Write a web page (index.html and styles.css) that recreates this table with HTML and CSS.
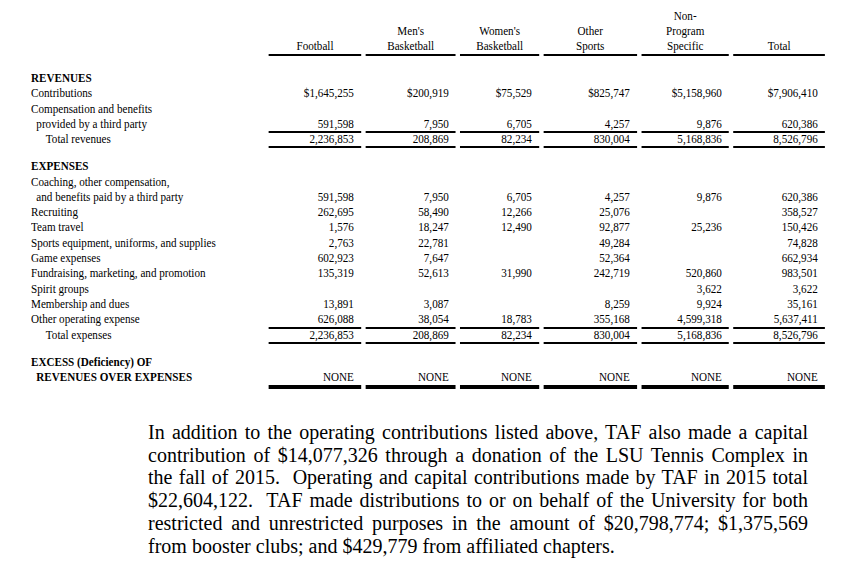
FILE: index.html
```html
<!DOCTYPE html>
<html>
<head>
<meta charset="utf-8">
<link rel="stylesheet" href="styles.css">
</head>
<body>
<div class="page">
  <div class="statement">
    <div class="row head">
      <div></div>
      <div class="colhead">Football</div>
      <div class="colhead">Men's<br>Basketball</div>
      <div class="colhead">Women's<br>Basketball</div>
      <div class="colhead">Other<br>Sports</div>
      <div class="colhead">Non-<br>Program<br>Specific</div>
      <div class="colhead">Total</div>
    </div>

    <div class="section revenues">
      <div class="row"><div class="label bold">REVENUES</div><div></div><div></div><div></div><div></div><div></div><div></div></div>
      <div class="row"><div class="label">Contributions</div><div class="num">$1,645,255</div><div class="num">$200,919</div><div class="num">$75,529</div><div class="num">$825,747</div><div class="num">$5,158,960</div><div class="num">$7,906,410</div></div>
      <div class="row"><div class="label">Compensation and benefits</div><div></div><div></div><div></div><div></div><div></div><div></div></div>
      <div class="row"><div class="label ind1">provided by a third party</div><div class="num ul">591,598</div><div class="num ul">7,950</div><div class="num ul">6,705</div><div class="num ul">4,257</div><div class="num ul">9,876</div><div class="num ul">620,386</div></div>
      <div class="row"><div class="label ind2">Total revenues</div><div class="num dul">2,236,853</div><div class="num dul">208,869</div><div class="num dul">82,234</div><div class="num dul">830,004</div><div class="num dul">5,168,836</div><div class="num dul">8,526,796</div></div>
    </div>

    <div class="section expenses">
      <div class="row"><div class="label bold">EXPENSES</div><div></div><div></div><div></div><div></div><div></div><div></div></div>
      <div class="row"><div class="label">Coaching, other compensation,</div><div></div><div></div><div></div><div></div><div></div><div></div></div>
      <div class="row"><div class="label ind1">and benefits paid by a third party</div><div class="num">591,598</div><div class="num">7,950</div><div class="num">6,705</div><div class="num">4,257</div><div class="num">9,876</div><div class="num">620,386</div></div>
      <div class="row"><div class="label">Recruiting</div><div class="num">262,695</div><div class="num">58,490</div><div class="num">12,266</div><div class="num">25,076</div><div class="num"></div><div class="num">358,527</div></div>
      <div class="row"><div class="label">Team travel</div><div class="num">1,576</div><div class="num">18,247</div><div class="num">12,490</div><div class="num">92,877</div><div class="num">25,236</div><div class="num">150,426</div></div>
      <div class="row"><div class="label">Sports equipment, uniforms, and supplies</div><div class="num">2,763</div><div class="num">22,781</div><div class="num"></div><div class="num">49,284</div><div class="num"></div><div class="num">74,828</div></div>
      <div class="row"><div class="label">Game expenses</div><div class="num">602,923</div><div class="num">7,647</div><div class="num"></div><div class="num">52,364</div><div class="num"></div><div class="num">662,934</div></div>
      <div class="row"><div class="label">Fundraising, marketing, and promotion</div><div class="num">135,319</div><div class="num">52,613</div><div class="num">31,990</div><div class="num">242,719</div><div class="num">520,860</div><div class="num">983,501</div></div>
      <div class="row"><div class="label">Spirit groups</div><div class="num"></div><div class="num"></div><div class="num"></div><div class="num"></div><div class="num">3,622</div><div class="num">3,622</div></div>
      <div class="row"><div class="label">Membership and dues</div><div class="num">13,891</div><div class="num">3,087</div><div class="num"></div><div class="num">8,259</div><div class="num">9,924</div><div class="num">35,161</div></div>
      <div class="row"><div class="label">Other operating expense</div><div class="num ul">626,088</div><div class="num ul">38,054</div><div class="num ul">18,783</div><div class="num ul">355,168</div><div class="num ul">4,599,318</div><div class="num ul">5,637,411</div></div>
      <div class="row"><div class="label ind2">Total expenses</div><div class="num dul">2,236,853</div><div class="num dul">208,869</div><div class="num dul">82,234</div><div class="num dul">830,004</div><div class="num dul">5,168,836</div><div class="num dul">8,526,796</div></div>
    </div>

    <div class="section excess">
      <div class="row"><div class="label bold">EXCESS (Deficiency) OF</div><div></div><div></div><div></div><div></div><div></div><div></div></div>
      <div class="row none-row"><div class="label bold ind1">REVENUES OVER EXPENSES</div><div class="num thick">NONE</div><div class="num thick">NONE</div><div class="num thick">NONE</div><div class="num thick">NONE</div><div class="num thick">NONE</div><div class="num thick">NONE</div></div>
    </div>
  </div>

  <p class="note">In addition to the operating contributions listed above, TAF also made a capital contribution of $14,077,326 through a donation of the LSU Tennis Complex in the fall of 2015.&nbsp; Operating and capital contributions made by TAF in 2015 total $22,604,122.&nbsp; TAF made distributions to or on behalf of the University for both restricted and unrestricted purposes in the amount of $20,798,774; $1,375,569 from booster clubs; and $429,779 from affiliated chapters.</p>
</div>
</body>
</html>
```
FILE: styles.css
```css
html {
  overflow: hidden;
  background: #ffffff;
}

body {
  margin: 0;
  background: #ffffff;
  color: #000000;
  font-family: "Liberation Serif", "Times New Roman", serif;
}

.page {
  padding-top: 9px;
}

.statement {
  width: 892px;
  margin-left: 31px;
  transform: scaleX(0.89);
  transform-origin: left top;
  font-size: 12.5px;
}

.row {
  display: grid;
  grid-template-columns: 262.4px 103.4px 101.7px 88.3px 105.1px 98.4px 102.8px;
  column-gap: 5px;
  height: 15.3px;
  line-height: 13px;
}

.row > div {
  box-sizing: border-box;
  white-space: nowrap;
}

.row.head {
  height: auto;
  align-items: end;
  line-height: 15px;
}

.colhead {
  text-align: center;
  border-bottom: 2px solid #000;
}

.section.revenues {
  margin-top: 16px;
}

.section.expenses {
  margin-top: 11.8px;
}

.section.excess {
  margin-top: 11.8px;
}

.bold {
  font-weight: bold;
}

.ind1 {
  padding-left: 6px;
}

.ind2 {
  padding-left: 16.7px;
}

.num {
  text-align: right;
  padding-right: 8px;
}

.ul {
  border-bottom: 2px solid #000;
}

.dul {
  border-bottom: 2.5px solid #000;
}

.row.none-row {
  height: auto;
}

.thick {
  padding-bottom: 1px;
  border-bottom: 4px solid #000;
}

.note {
  margin: 31.9px 0 0 148px;
  width: 660px;
  font-size: 20px;
  line-height: 22.8px;
  text-align: justify;
}
```
